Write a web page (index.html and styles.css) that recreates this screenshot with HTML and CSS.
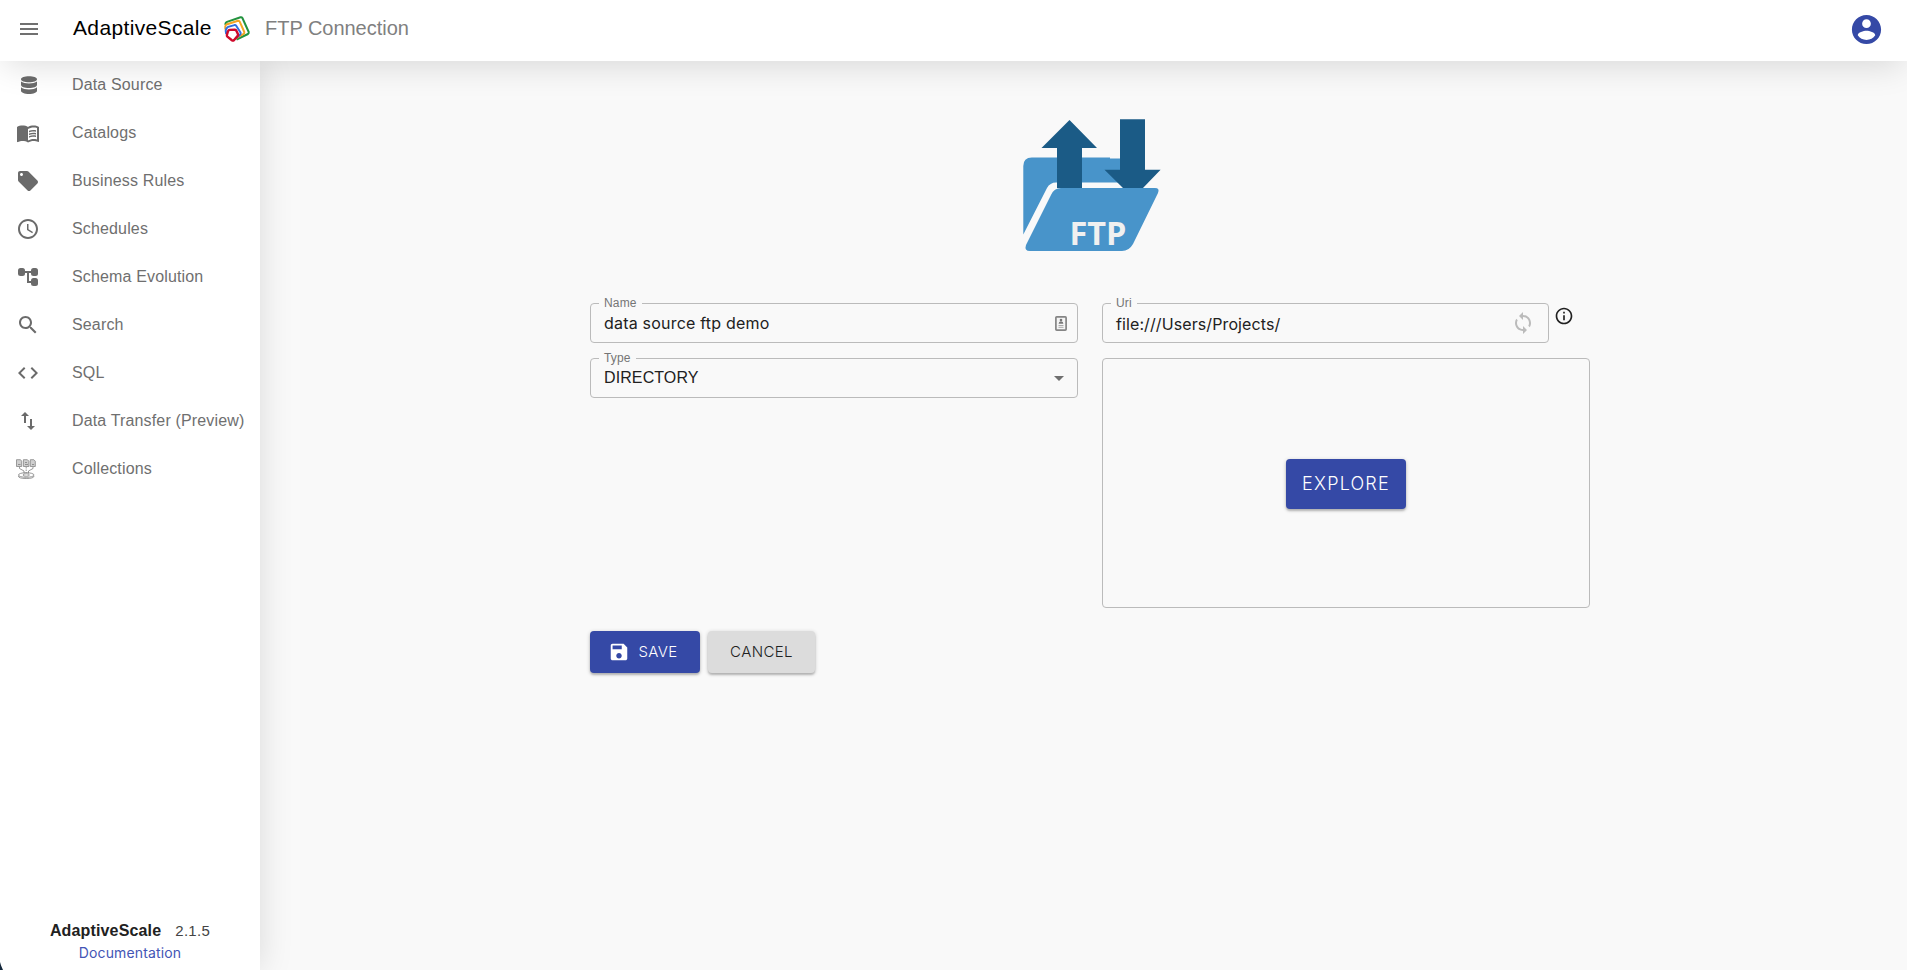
FILE: index.html
```html
<!DOCTYPE html>
<html lang="en">
<head>
<meta charset="utf-8">
<title>FTP Connection</title>
<link rel="stylesheet" href="styles.css">
</head>
<body>
<header class="topbar">
  <button class="icon-button menu" aria-label="Menu"><svg width="24" height="24" viewBox="0 0 24 24"><path d="M3 18h18v-2H3v2zm0-5h18v-2H3v2zm0-7v2h18V6H3z"/></svg></button>
  <span class="brand"><span class="t">AdaptiveScale</span></span>
  <svg class="logo" width="26" height="26" viewBox="0 0 26 26" fill="none" stroke-linejoin="round">
    <path d="M1.500 9V7.500Q2 6.300 3 5.900L16.500 1.300Q17.800 1 18.400 2L24.700 16Q25 17.300 24 18L12.500 23.500" stroke="#23933f" stroke-width="2"/>
    <path d="M1.300 13.500V10.300Q1.800 8.800 3.200 8.200L14 4.800Q15.200 4.600 15.700 5.700L20.300 16Q20.600 17.200 19.600 17.900L12.500 22" stroke="#f5a623" stroke-width="2"/>
    <path d="M2.200 18 1.700 14.500Q2 12 4.100 10.900L10.500 9.100Q11.600 8.900 12.200 9.800L16.500 16.500Q17 17.600 16.200 18.500L12.800 21.500" stroke="#2f6fe0" stroke-width="2"/>
    <path d="M4 15.200Q4.500 14 5.700 13.900L10.800 13.800Q12 14 12.500 15L14 18.300Q14.200 19.300 13.500 20.100L9.900 24.200Q8.900 25 7.900 24.300L3.400 20.600Q2.700 19.900 2.900 19z" stroke="#cf0a2c" stroke-width="2.400" fill="#fff"/>
  </svg>
  <span class="page-title"><span class="t">FTP Connection</span></span>
  <svg class="account" width="35" height="35" viewBox="0 0 24 24"><path d="M12 2C6.48 2 2 6.48 2 12s4.480 10 10 10 10-4.480 10-10S17.520 2 12 2zm0 3c1.660 0 3 1.340 3 3s-1.340 3-3 3-3-1.340-3-3 1.340-3 3-3zm0 14.200c-2.500 0-4.710-1.280-6-3.220.030-1.990 4-3.080 6-3.080 1.990 0 5.970 1.090 6 3.080-1.290 1.940-3.500 3.220-6 3.220z"/></svg>
</header>
<div class="shell">
  <aside class="sidebar">
    <nav class="nav">
      <a class="nav-item"><svg class="nav-icon" width="24" height="24" viewBox="0 0 24 24"><path d="M5 6.200C5 4.400 8.600 3.200 13 3.200s8 1.200 8 3-3.500 3-8 3-8-1.200-8-3zM5 8.600c1.600 1.300 4.600 2 8 2s6.400-.7 8-2v3.500c0 1.700-3.500 3-8 3s-8-1.300-8-3zM5 14.300c1.600 1.400 4.600 2.200 8 2.200s6.400-.8 8-2.200v3.400c0 1.700-3.500 3.200-8 3.200s-8-1.500-8-3.200z"/></svg><span class="t">Data Source</span></a>
      <a class="nav-item"><svg class="nav-icon" width="24" height="24" viewBox="0 0 24 24"><path d="M21 5c-1.110-.350-2.330-.5-3.500-.5-1.950 0-4.050.4-5.500 1.500-1.450-1.100-3.550-1.500-5.500-1.500S2.450 4.900 1 6v14.650c0 .250.250.5.5.5.1 0 .150-.050.250-.050C3.100 20.450 5.050 20 6.500 20c1.950 0 4.050.4 5.500 1.500 1.350-.850 3.800-1.500 5.500-1.500 1.650 0 3.350.3 4.750 1.050.1.050.150.050.250.050.250 0 .5-.250.5-.5V6c-.6-.450-1.250-.750-2-1zm0 13.500c-1.100-.350-2.300-.5-3.500-.5-1.700 0-4.150.650-5.500 1.500V8c1.350-.850 3.800-1.500 5.500-1.500 1.200 0 2.400.150 3.500.5v11.500z"/><path d="M17.500 10.500c.88 0 1.730.09 2.500.26V9.240c-.79-.15-1.640-.24-2.500-.24-1.700 0-3.240.29-4.500.83v1.660c1.130-.64 2.700-.99 4.500-.99zM13 12.490v1.660c1.130-.64 2.700-.99 4.500-.99.88 0 1.730.09 2.500.26V11.900c-.79-.15-1.640-.24-2.500-.24-1.700 0-3.240.3-4.500.83zM17.500 14.330c-1.700 0-3.240.29-4.500.83v1.660c1.130-.64 2.700-.99 4.500-.99.88 0 1.730.09 2.500.26v-1.520c-.79-.16-1.640-.24-2.500-.24z"/></svg><span class="t">Catalogs</span></a>
      <a class="nav-item"><svg class="nav-icon" width="24" height="24" viewBox="0 0 24 24"><path d="M21.410 11.580l-9-9C12.050 2.220 11.550 2 11 2H4c-1.100 0-2 .9-2 2v7c0 .55.22 1.050.59 1.420l9 9c.36.36.86.58 1.410.58.55 0 1.050-.22 1.410-.59l7-7c.37-.36.59-.86.59-1.410 0-.55-.23-1.060-.59-1.420zM5.500 7C4.670 7 4 6.330 4 5.500S4.670 4 5.500 4 7 4.670 7 5.500 6.330 7 5.500 7z"/></svg><span class="t">Business Rules</span></a>
      <a class="nav-item"><svg class="nav-icon" width="24" height="24" viewBox="0 0 24 24"><path d="M11.990 2C6.470 2 2 6.480 2 12s4.470 10 9.990 10C17.520 22 22 17.520 22 12S17.520 2 11.990 2zM12 20c-4.420 0-8-3.580-8-8s3.580-8 8-8 8 3.580 8 8-3.580 8-8 8zm.5-13H11v6l5.250 3.150.75-1.230-4.500-2.670z"/></svg><span class="t">Schedules</span></a>
      <a class="nav-item"><svg class="nav-icon" width="24" height="24" viewBox="0 0 24 24"><rect x="2" y="3" width="7" height="8" rx="2.500"/><rect x="15" y="3" width="7" height="8" rx="2.500"/><rect x="15" y="13" width="7" height="8" rx="2.500"/><path d="M8 6h8v2h-3v8h3v2h-5V8H8z"/></svg><span class="t">Schema Evolution</span></a>
      <a class="nav-item"><svg class="nav-icon" width="24" height="24" viewBox="0 0 24 24"><path d="M15.500 14h-.79l-.28-.27C15.410 12.590 16 11.110 16 9.500 16 5.910 13.090 3 9.500 3S3 5.910 3 9.500 5.910 16 9.500 16c1.610 0 3.090-.59 4.230-1.570l.27.28v.79l5 4.990L20.490 19l-4.990-5zm-6 0C7.010 14 5 11.990 5 9.500S7.010 5 9.500 5 14 7.010 14 9.500 11.990 14 9.500 14z"/></svg><span class="t">Search</span></a>
      <a class="nav-item"><svg class="nav-icon" width="24" height="24" viewBox="0 0 24 24"><path d="M9.400 16.600L4.800 12l4.600-4.600L8 6l-6 6 6 6 1.400-1.400zm5.200 0l4.600-4.600-4.600-4.600L16 6l6 6-6 6-1.400-1.400z"/></svg><span class="t">SQL</span></a>
      <a class="nav-item"><svg class="nav-icon" width="24" height="24" viewBox="0 0 24 24"><path d="M16 17.010V10h-2v7.010h-3L15 21l4-3.990h-3zM9 3L5 6.990h3V14h2V6.990h3L9 3z"/></svg><span class="t">Data Transfer (Preview)</span></a>
      <a class="nav-item"><svg class="nav-icon" width="24" height="24" viewBox="0 0 24 24"><g fill="#cfcfcf" stroke="#858585" stroke-width=".8"><path d="M.5 2.700h4l1.200 1.500v5.300H.5zM7.400 2.700h4l1.500 1.500v5.300H7.400zM14.300 2.700h3.500l1.500 1.500v5.300h-5z"/></g><g fill="none" stroke="#808080" stroke-width=".8"><path d="M2 7.500h2.500M9 5.500h2M9 7.500h3M16 7.500h2M3.500 10v1.500L8 14v2.500M17 10v1.500L12.500 14v2.500"/><path d="M10.200 10v6" stroke-dasharray="1.500 1"/><ellipse cx="10.200" cy="18" rx="7.800" ry="2.300"/><ellipse cx="10.200" cy="18" rx="3.200" ry="1.200"/><path d="M2.400 19q0 2.500 7.800 2.500T18 19"/></g></svg><span class="t">Collections</span></a>
    </nav>
    <footer class="about">
      <div class="release"><strong class="t">AdaptiveScale</strong><span class="version"><span class="t">2.1.5</span></span></div>
      <a class="docs"><span class="t">Documentation</span></a>
    </footer>
  </aside>
  <main class="content">
    <svg class="ftp" width="138" height="140" viewBox="0 0 138 140">
      <path fill="#4894ca" d="M.3 115.500V47q0-8.500 8.500-8.500H87v1h20v24H33q-6 0-9 5.500z"/>
      <path fill="#4894ca" d="M38 69h94q5 0 3 5l-25 51q-4 7-11 7H7q-6 0-4-6l25-50q3-7 10-7z"/>
      <path fill="#1b5b86" d="M46.500 1 74 29H59v40H34V29H18.500zM97 .2h25v50.500H137.600L120 69H100L81.500 50.700H97z"/>
      <text class="ftp-label" x="46.500" y="125.500" textLength="57" lengthAdjust="spacingAndGlyphs">FTP</text>
    </svg>
    <form class="form">
      <div class="column">
        <fieldset class="field"><legend class="name-legend"><span class="t">Name</span></legend><span class="value name-value"><span class="t">data source ftp demo</span></span>
          <svg class="contact" width="12" height="15" viewBox="0 0 12 15"><rect x=".9" y=".9" width="10.200" height="13.200" rx=".8" fill="#f5f5f5" stroke="#858585" stroke-width="1.700"/><circle cx="6" cy="4" r="1.300" fill="#777"/><path d="M3.600 7.800q0-2.500 2.400-2.500t2.400 2.500z" fill="#777"/><path d="M3.500 9.500h5M3.500 11.300h5" stroke="#aaa"/></svg>
        </fieldset>
        <fieldset class="field"><legend class="type-legend"><span class="t">Type</span></legend><span class="value type-value"><span class="t">DIRECTORY</span></span>
          <svg class="caret" width="24" height="24" viewBox="0 0 24 24"><path d="M7 10l5 5 5-5z"/></svg>
        </fieldset>
      </div>
      <div class="column">
        <div class="uri-row">
          <fieldset class="field"><legend class="uri-legend"><span class="t">Uri</span></legend><span class="value uri-value"><span class="t">file:///Users/Projects/</span></span>
            <svg class="sync" width="24" height="24" viewBox="0 0 24 24"><path d="M12 4V1L8 5l4 4V6c3.310 0 6 2.690 6 6 0 1.010-.25 1.970-.7 2.800l1.460 1.460C19.540 15.030 20 13.570 20 12c0-4.420-3.580-8-8-8zm0 14c-3.310 0-6-2.690-6-6 0-1.010.25-1.970.7-2.800L5.240 7.740C4.460 8.970 4 10.430 4 12c0 4.420 3.580 8 8 8v3l4-4-4-4v3z"/></svg>
          </fieldset>
          <svg class="info" width="20" height="20" viewBox="0 0 24 24"><path d="M11 7h2v2h-2zm0 4h2v6h-2zm1-9C6.480 2 2 6.480 2 12s4.480 10 10 10 10-4.480 10-10S17.520 2 12 2zm0 18c-4.410 0-8-3.590-8-8s3.590-8 8-8 8 3.590 8 8-3.590 8-8 8z"/></svg>
        </div>
        <div class="explorer"><button type="button" class="button primary explore"><span class="t">EXPLORE</span></button></div>
      </div>
    </form>
    <div class="actions">
      <button class="button primary save"><svg width="22" height="22" viewBox="0 0 24 24"><path d="M17 3H5c-1.110 0-2 .9-2 2v14c0 1.100.89 2 2 2h14c1.100 0 2-.9 2-2V7l-4-4zm-5 16c-1.660 0-3-1.340-3-3s1.340-3 3-3 3 1.340 3 3-1.340 3-3 3zm3-10H5V5h10v4z"/></svg><span class="t">SAVE</span></button>
      <button class="button cancel"><span class="t">CANCEL</span></button>
    </div>
  </main>
</div>
<div class="corner"></div>
</body>
</html>
```
FILE: styles.css
```css
* { box-sizing: border-box; }
body { margin: 0; height: 970px; overflow: hidden; display: flex; flex-direction: column; background: #f9f9f9; color: #212121; font-family: "Liberation Sans", Arial, sans-serif; }
button { border: 0; margin: 0; padding: 0; background: none; font: inherit; }
svg { display: block; flex: none; overflow: visible; }
.t { white-space: nowrap; }

.topbar { position: relative; z-index: 3; flex: none; display: flex; align-items: center; height: 61px; padding: 0 23px 3px 17px; background: #fff; box-shadow: 0 8px 34px -4px rgba(0, 0, 0, .14); }
.icon-button svg { fill: #707070; }
.brand { width: 151px; margin: -2px 0 0 32px; font-size: 21px; line-height: 24px; color: #000; letter-spacing: .35px; }
.page-title { margin: -2px 0 0 15px; font-size: 20px; line-height: 24px; color: #808080; letter-spacing: -.02px; }
.account { margin-left: auto; fill: #3549a6; }

.shell { flex: 1; display: flex; min-height: 0; }
.sidebar { position: relative; z-index: 2; width: 260px; flex: none; display: flex; flex-direction: column; justify-content: space-between; background: #fff; box-shadow: 0 0 32px rgba(0, 0, 0, .13); }
.nav-item { display: flex; align-items: center; height: 48px; padding-left: 16px; color: #6f6f6f; font-size: 16px; letter-spacing: .15px; }
.nav-icon { width: 24px; margin-right: 32px; fill: #6b6b6b; }
.about { padding-bottom: 6px; text-align: center; line-height: 22px; }
.release { display: flex; justify-content: center; font-size: 16px; letter-spacing: .15px; }
.version { margin-left: 14px; font-size: 15px; color: #444; letter-spacing: .3px; }
.docs { display: block; font: 14px/22px Inter, sans-serif; letter-spacing: .15px; color: #4355b5; }

.content { flex: 1; padding: 58px 0 0 330px; }
.ftp { margin-left: 433px; }
.ftp-label { font: 700 33px "Open Sans", sans-serif; fill: #f0f0f0; }
.form { display: grid; grid-template-columns: 488px 488px; column-gap: 24px; margin-top: 38px; }
.column { display: flex; flex-direction: column; gap: 9px; }
.field { position: relative; display: flex; align-items: center; width: 100%; height: 46px; min-width: 0; margin: 0; padding: 0 13px; border: 1px solid #bbb; border-radius: 4px; }
.field legend { height: 12px; margin-left: -5px; padding: 0 5px; font-size: 12px; line-height: 12px; color: #757575; letter-spacing: .15px; }
.name-legend { width: 43px; }
.type-legend { width: 37px; }
.uri-legend { width: 26px; }
.value { display: block; font: 16px/24px Inter, sans-serif; }
.name-value { padding-top: 2px; letter-spacing: .2px; }
.type-value { padding-top: 2px; font-family: "Liberation Sans", Arial, sans-serif; letter-spacing: .1px; }
.uri-value { margin-top: -4px; letter-spacing: .1px; }
.uri-row { display: flex; align-items: flex-start; }
.uri-row .field { width: 447px; }
.contact { position: absolute; right: 10px; top: 7px; }
.caret { position: absolute; right: 6px; top: 2px; fill: #6f6f6f; }
.sync { position: absolute; right: 13px; top: 2px; fill: #bbb; }
.info { margin: 9px 0 0 5px; fill: #212121; }
.explorer { display: flex; align-items: center; justify-content: center; height: 250px; margin-top: 6px; border: 1px solid #bbb; border-radius: 4px; }
.button { display: flex; align-items: center; justify-content: center; height: 42px; padding-bottom: 2px; border-radius: 4px; font-family: Inter, sans-serif; font-size: 15px; font-weight: 300; letter-spacing: .4px; box-shadow: 0 1px 4px rgba(0, 0, 0, .2), 0 2px 2px rgba(0, 0, 0, .18); }
.primary { color: #fff; background: #3549a6; }
.explore { width: 120px; height: 50px; font-size: 18px; letter-spacing: 1.2px; margin-top: 2px; }
.actions { display: flex; gap: 8px; margin-top: 23px; }
.save { width: 110px; gap: 8px; padding-right: 4px; }
.save svg { fill: #fff; margin-top: 2px; }
.cancel { width: 107px; background: #dcdcdc; color: #212121; }
.corner { position: absolute; z-index: 5; left: 0; bottom: 0; width: 3px; height: 8px; background: #14283c; clip-path: polygon(0 0, 35% 45%, 100% 100%, 0 100%); }
```
